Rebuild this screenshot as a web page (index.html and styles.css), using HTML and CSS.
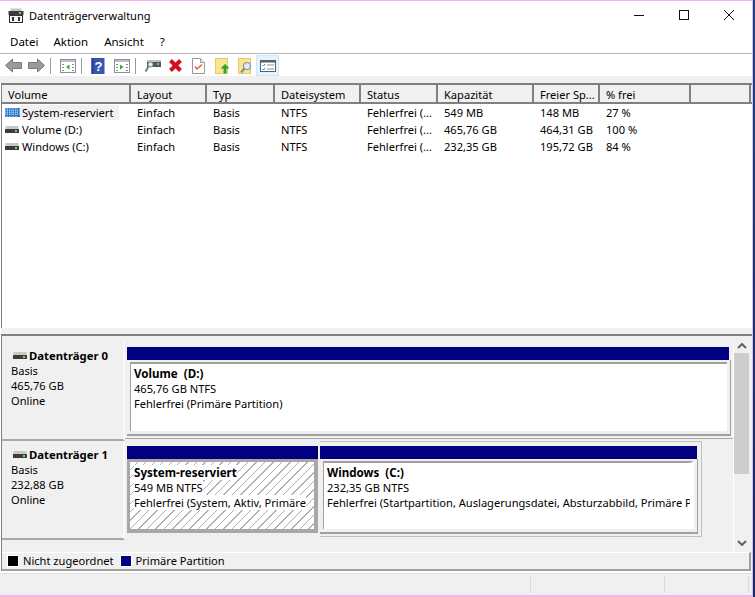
FILE: index.html
```html
<!DOCTYPE html>
<html lang="de">
<head>
<meta charset="utf-8">
<title>Datenträgerverwaltung</title>
<link rel="stylesheet" href="styles.css">
</head>
<body>
<svg class="defs" width="0" height="0">
  <defs>
    <g id="drive">
      <rect x="0.500" y="1" width="13" height="3" fill="#c8c8c8"/>
      <rect x="0" y="4" width="14" height="4" fill="#3c3c3c"/>
      <rect x="10" y="5" width="2" height="2" fill="#5fe05f"/>
    </g>
  </defs>
</svg>
<div class="window">
  <header class="titlebar">
    <svg class="app-icon" width="16" height="16" viewBox="0 0 16 16">
      <rect x="2.500" y="0.500" width="11" height="3" fill="#c4c4c4"/>
      <rect x="0.500" y="3" width="15" height="4" fill="#3a3a3a"/>
      <rect x="11" y="4" width="2" height="2" fill="#5fe05f"/>
      <rect x="1.500" y="7.500" width="13" height="7" fill="#f4f4f4" stroke="#333"/>
      <rect x="4" y="9" width="2" height="4" fill="#333"/>
      <rect x="10" y="9" width="2" height="4" fill="#333"/>
    </svg>
    <span class="app-title">Datenträgerverwaltung</span>
    <div class="win-btns">
      <svg width="10" height="10" viewBox="0 0 10 10"><path d="M0 5.500h10" stroke="#111" fill="none"/></svg>
      <svg width="10" height="10" viewBox="0 0 10 10"><rect x="0.500" y="0.500" width="9" height="9" stroke="#111" fill="none"/></svg>
      <svg width="10" height="10" viewBox="0 0 10 10"><path d="M0 0l10 10M10 0L0 10" stroke="#111" fill="none"/></svg>
    </div>
  </header>
  <nav class="menubar">
    <span class="menu m1">Datei</span>
    <span class="menu m2">Aktion</span>
    <span class="menu m3">Ansicht</span>
    <span class="menu m4">?</span>
  </nav>
  <div class="toolbar">
    <span class="tb"><svg width="17" height="15" viewBox="0 0 17 15"><path d="M0.500 7.500L7.500 1v3.500h9v6h-9V14z" fill="#9a9a9a" stroke="#7a7a7a"/></svg></span>
    <span class="tb"><svg width="17" height="15" viewBox="0 0 17 15"><path d="M16.500 7.500L9.500 1v3.500h-9v6h9V14z" fill="#9a9a9a" stroke="#7a7a7a"/></svg></span>
    <span class="sep"></span>
    <span class="tb"><svg width="16" height="14" viewBox="0 0 16 14"><rect x="0.500" y="0.500" width="15" height="13" fill="#fff" stroke="#8a9096"/><rect x="1" y="1" width="14" height="2" fill="#b8c0c8"/><path d="M2 5h2v1H2zM2 8h2v1H2zM2 11h2v1H2zM12 5h2v1h-2zM12 8h2v1h-2zM12 11h2v1h-2z" fill="#8a9096"/><path d="M9.500 5.500v5L6 8z" fill="#30a838"/></svg></span>
    <span class="sep"></span>
    <span class="tb tb-help"><svg width="14" height="16" viewBox="0 0 14 16"><rect width="13" height="16" x="0.500" fill="#3558b0"/><rect x="0.500" width="2" height="16" fill="#223c88"/><text x="7.500" y="13" class="help-q">?</text></svg></span>
    <span class="tb"><svg width="16" height="14" viewBox="0 0 16 14"><rect x="0.500" y="0.500" width="15" height="13" fill="#fff" stroke="#8a9096"/><rect x="1" y="1" width="14" height="2" fill="#b8c0c8"/><path d="M2 5h2v1H2zM2 8h2v1H2zM2 11h2v1H2zM12 5h2v1h-2zM12 8h2v1h-2zM12 11h2v1h-2z" fill="#8a9096"/><path d="M6 5.500v5L9.500 8z" fill="#30a838"/></svg></span>
    <span class="sep"></span>
    <span class="tb"><svg width="16" height="15" viewBox="0 0 16 15"><rect x="2" y="2" width="14" height="7" fill="#555"/><rect x="2" y="2" width="14" height="2" fill="#c0c0c0"/><rect x="12" y="5" width="2" height="2" fill="#5fe05f"/><circle cx="5.500" cy="6.500" r="2.500" fill="#d8ecf8" stroke="#7890a0"/><path d="M3.500 8.500L0.500 13.500" stroke="#7a7a7a" stroke-width="2"/></svg></span>
    <span class="tb"><svg width="15" height="15" viewBox="0 0 15 15"><path d="M2.500 2.500l10 10M12.500 2.500l-10 10" stroke="#d01020" stroke-width="4" fill="none"/></svg></span>
    <span class="tb"><svg width="13" height="16" viewBox="0 0 13 16"><path d="M0.500 0.500h8l4 4v11H0.500z" fill="#fff" stroke="#999"/><path d="M8.500 0.500v4h4" fill="#eee" stroke="#999"/><path d="M3 8.500l2 2.500 5-4.500" fill="none" stroke="#e05a30" stroke-width="1.500"/></svg></span>
    <span class="tb"><svg width="14" height="16" viewBox="0 0 14 16"><rect x="0.500" y="0.500" width="12" height="15" fill="#fde58f" stroke="#e4c870"/><path d="M10 6l4.500 4.500H11.500V15.500H8.500V10.500H5.500z" fill="#2fa52f"/></svg></span>
    <span class="tb"><svg width="14" height="16" viewBox="0 0 14 16"><rect x="0.500" y="0.500" width="12" height="15" fill="#fde58f" stroke="#e4c870"/><circle cx="9" cy="8" r="3.500" fill="#dceefa" stroke="#7f97a8" stroke-width="1.200"/><path d="M6.500 10.500L3 14.500" stroke="#8a8a8a" stroke-width="2"/></svg></span>
    <span class="tb tb-on"><svg width="16" height="12" viewBox="0 0 16 12"><rect x="0.500" y="0.500" width="15" height="11" fill="#fff" stroke="#5a6068"/><rect x="0.500" y="0.500" width="15" height="2" fill="#5a6068"/><path d="M2.500 5l1 1 1.500-2M2.500 9l1 1 1.500-2" fill="none" stroke="#2a80d0"/><path d="M7 5h7M7 9h7" stroke="#8a9096"/></svg></span>
  </div>
  <div class="band"></div>

  <section class="list">
    <div class="row head">
      <span class="c1">Volume</span><span class="c2">Layout</span><span class="c3">Typ</span><span class="c4">Dateisystem</span><span class="c5">Status</span><span class="c6">Kapazität</span><span class="c7">Freier Sp...</span><span class="c8">% frei</span><span class="c9"></span>
    </div>
    <div class="row item">
      <span class="c1"><svg class="vol" width="15" height="9" viewBox="0 0 15 9"><rect width="15" height="9" y="0" fill="#2a78d0"/><path d="M0 2h15M0 4h15M0 6h15M2 0v9M5 0v9M8 0v9M11 0v9" stroke="#bcd8f4" stroke-dasharray="1 1"/></svg><span class="vol-name sel">System-reserviert</span></span><span class="c2">Einfach</span><span class="c3">Basis</span><span class="c4">NTFS</span><span class="c5">Fehlerfrei (...</span><span class="c6">549 MB</span><span class="c7">148 MB</span><span class="c8">27 %</span>
    </div>
    <div class="row item">
      <span class="c1"><svg class="vol" width="15" height="9" viewBox="0 0 15 9"><use href="#drive"/></svg><span class="vol-name">Volume (D:)</span></span><span class="c2">Einfach</span><span class="c3">Basis</span><span class="c4">NTFS</span><span class="c5">Fehlerfrei (...</span><span class="c6">465,76 GB</span><span class="c7">464,31 GB</span><span class="c8">100 %</span>
    </div>
    <div class="row item">
      <span class="c1"><svg class="vol" width="15" height="9" viewBox="0 0 15 9"><use href="#drive"/></svg><span class="vol-name">Windows (C:)</span></span><span class="c2">Einfach</span><span class="c3">Basis</span><span class="c4">NTFS</span><span class="c5">Fehlerfrei (...</span><span class="c6">232,35 GB</span><span class="c7">195,72 GB</span><span class="c8">84 %</span>
    </div>
  </section>

  <div class="splitter"></div>

  <section class="lower">
    <div class="lower-main">
      <div class="disks">
        <div class="disk disk0">
          <div class="info">
            <div class="info-name"><svg width="15" height="9" viewBox="0 0 15 9"><use href="#drive"/></svg><b>Datenträger 0</b></div>
            <div>Basis</div><div>465,76 GB</div><div>Online</div>
          </div>
          <div class="parts">
            <div class="part wide">
              <div class="bar"></div>
              <div class="frame"><div class="inner"><b>Volume&nbsp; (D:)</b><br>465,76 GB NTFS<br>Fehlerfrei (Primäre Partition)</div></div>
            </div>
          </div>
        </div>
        <div class="disk disk1">
          <div class="info">
            <div class="info-name"><svg width="15" height="9" viewBox="0 0 15 9"><use href="#drive"/></svg><b>Datenträger 1</b></div>
            <div>Basis</div><div>232,88 GB</div><div>Online</div>
          </div>
          <div class="parts">
            <div class="part sys">
              <div class="bar"></div>
              <div class="frame selected"><div class="inner hatch"><span><b>System-reserviert</b></span><br><span>549 MB NTFS</span><br><span>Fehlerfrei (System, Aktiv, Primäre</span></div></div>
            </div>
            <div class="part win">
              <div class="bar"></div>
              <div class="frame"><div class="inner"><b>Windows&nbsp; (C:)</b><br>232,35 GB NTFS<br>Fehlerfrei (Startpartition, Auslagerungsdatei, Absturzabbild, Primäre Partition)</div></div>
            </div>
          </div>
        </div>
      </div>
      <div class="scroll">
        <svg width="10" height="6" viewBox="0 0 10 6"><path d="M1 5l4-4 4 4" fill="none" stroke="#606060" stroke-width="2"/></svg>
        <div class="thumb-track"><div class="thumb"></div></div>
        <svg width="10" height="6" viewBox="0 0 10 6"><path d="M1 1l4 4 4-4" fill="none" stroke="#606060" stroke-width="2"/></svg>
      </div>
    </div>
    <div class="legend">
      <i class="swatch black"></i><span>Nicht zugeordnet</span>
      <i class="swatch navy"></i><span>Primäre Partition</span>
    </div>
  </section>

  <footer class="status">
    <span class="st st1"></span><span class="st st2"></span><span class="st st3"></span>
  </footer>
</div>
</body>
</html>
```

FILE: styles.css
```css
* { box-sizing: border-box; }
html, body { margin: 0; height: 597px; overflow: hidden; }
body {
  background: linear-gradient(#0b4a86, #0c2f5c 90%);
  font: 11.1px/15px "Noto Sans", sans-serif;
  color: #000;
}
.defs { position: absolute; }
.window {
  width: 753px;
  height: 597px;
  background: #fff;
  border-top: 1px solid #f5b4ee;
  border-right: 1px solid #f5b4ee;
  border-bottom: 2px solid #f5b4ee;
  display: flex;
  flex-direction: column;
}

/* title bar */
.titlebar { height: 31px; flex: none; display: flex; align-items: center; padding: 0 0 2px 8px; }
.app-icon { margin-right: 5px; margin-top: 1px; }
.app-title { font-size: 11px; }
.win-btns { margin-left: auto; display: flex; gap: 35px; padding-right: 18px; margin-top: -1px; }

/* menu */
.menubar { height: 22px; flex: none; border-bottom: 1px solid #b4b0bc; display: flex; align-items: center; padding-bottom: 3px; font-size: 11.5px; }
.m1 { margin-left: 10px; }
.m2 { margin-left: 15px; }
.m3 { margin-left: 16px; }
.m4 { margin-left: 16px; }

/* toolbar */
.toolbar { height: 22px; flex: none; display: flex; align-items: stretch; padding: 1px 0 0 2px; }
.tb { width: 23px; display: flex; align-items: center; justify-content: center; }
.tb-help { padding-right: 2px; }
.tb-on { background: #e5f3ff; border: 1px solid #cce8ff; }
.sep { width: 8px; position: relative; }
.sep::after { content: ""; position: absolute; left: 2px; top: 3px; bottom: 2px; width: 1px; background: #9a9a9a; }
.help-q { font: bold 13px "Liberation Sans", sans-serif; fill: #fff; text-anchor: middle; }
.band { height: 7px; flex: none; background: #f0f0f0; }

/* list */
.list { height: 245px; flex: none; margin-left: 1px; border-left: 1px solid #808080; border-top: 2px solid #808080; background: #fff; }
.row { display: flex; }
.row > span { flex: none; padding-left: 6px; white-space: nowrap; overflow: hidden; }
.head { height: 19px; background: #f0f0f0; border-bottom: 2px solid #808080; }
.head > span { line-height: 17px; padding-top: 1px; border-right: 2px solid #808080; }
.item { height: 17px; line-height: 17px; }
.c1 { width: 129px; }
.c2 { width: 76px; }
.c3 { width: 68px; }
.c4 { width: 86px; }
.c5 { width: 77px; }
.c6 { width: 96px; }
.c7 { width: 66px; }
.c8 { width: 91px; }
.c9 { width: 60px; }
.item .c1 { display: flex; align-items: center; padding-left: 3px; }
.vol { flex: none; }
.vol-name { padding: 0 6px 0 2px; line-height: 15px; }
.sel { background: #f0f0f0; }

/* splitter */
.splitter { height: 8px; flex: none; margin-left: 1px; background: linear-gradient(#f0f0f0 6px, #808080 6px); }

/* lower */
.lower { flex: none; height: 235px; margin-left: 1px; border-left: 1px solid #808080; background: #f0f0f0; display: flex; flex-direction: column; }
.lower-main { flex: none; height: 216px; padding-top: 6px; display: flex; }
.disks { width: 731px; flex: none; }
.disk { display: flex; height: 99px; }
.info { width: 123px; flex: none; padding: 6px 0 0 9px; border-right: 2px solid #f8f8f8; border-bottom: 2px solid #a8a8a8; }
.info-name { display: flex; align-items: center; height: 15px; font-size: 11.3px; }
.info-name svg { margin: 0 1px 0 2px; }
.parts { flex: 1; display: flex; padding: 5px 0 0 2px; gap: 2px; }
.disk0 .parts { border-bottom: 1px solid #a8a8a8; margin-bottom: 2px; }
.part { display: flex; flex-direction: column; position: relative; }
.part b { font-size: 11.6px; }
.wide { width: 604px; height: 89px; }
.wide .bar { margin-right: 2px; }
.sys { width: 191px; height: 87px; }
.win { width: 378px; height: 88px; }
.win .bar { margin-right: 1px; }
.win::after { content: ""; position: absolute; left: 0; top: -5px; right: -4px; bottom: -3px; border: 1px solid #c0c0c0; border-left: 0; pointer-events: none; }
.bar { height: 13px; flex: none; background: #000080; }
.frame { flex: 1; min-height: 0; background: #f0f0f0; padding: 2px 3px 3px 3px; border-right: 1px solid #a0a0a0; border-bottom: 2px solid #a0a0a0; }
.inner { height: 100%; background: #fff; border-top: 2px solid #a0a0a0; border-left: 1px solid #a0a0a0; padding: 2px 0 0 3px; white-space: nowrap; overflow: hidden; }
.win .inner { border-right: 4px solid #fff; }
.selected { background: #a8a8a8; border: 0; padding: 3px 4px 4px 3px; }
.hatch {
  border: 0;
  padding: 3px 0 0 4px;
  background: repeating-linear-gradient(135deg, #fff 0 5px, #b0b0b0 5px 6px);
}
.hatch span { background: #fff; }

/* scrollbar */
.scroll { width: 17px; flex: none; border-left: 1px solid #fff; display: flex; flex-direction: column; align-items: center; padding: 1px 0 6px; height: 210px; }
.thumb-track { flex: 1; width: 100%; margin: 4px 0 0; }
.thumb { height: 121px; width: 15px; background: #cdcdcd; }

/* legend */
.legend { height: 19px; flex: none; margin-right: 1px; border-top: 1px solid #fff; border-right: 2px solid #a0a0a0; border-bottom: 2px solid #a0a0a0; display: flex; align-items: center; padding: 0 0 1px 5px; }
.swatch { width: 12px; height: 12px; border: 1px solid #fff; margin-right: 4px; }
.legend span { margin-right: 6px; }
.black { background: #000; }
.navy { background: #000080; }

/* status */
.status { flex: 1; margin-top: 2px; border-top: 1px solid #e0e0e0; background: #f0f0f0; display: flex; padding: 2px 0; }
.st { border-right: 1px solid #dcdcdc; }
.st1 { width: 531px; }
.st2 { width: 134px; }
.st3 { width: 84px; }
```
